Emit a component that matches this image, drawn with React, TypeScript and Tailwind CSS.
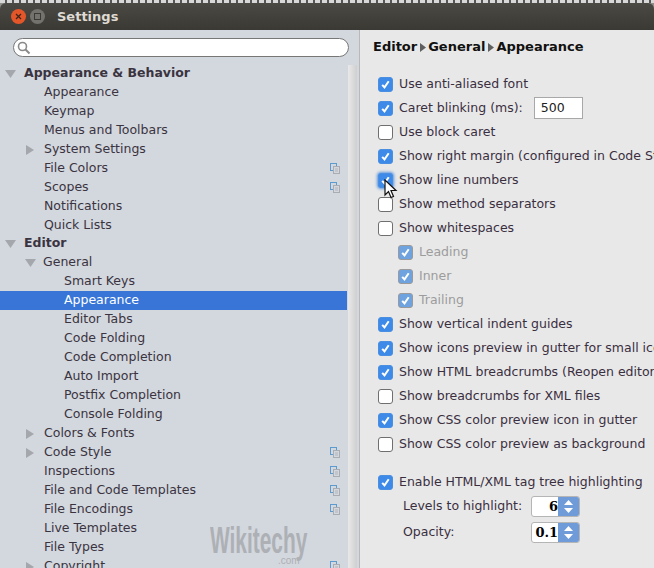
import React from 'react';

type TreeRow = {
  label: string;
  level: 0 | 1 | 2;
  bold?: boolean;
  arrow?: 'open' | 'closed';
  project?: boolean;
  selected?: boolean;
};

const tree: TreeRow[] = [
  { label: 'Appearance & Behavior', level: 0, bold: true, arrow: 'open' },
  { label: 'Appearance', level: 1 },
  { label: 'Keymap', level: 1 },
  { label: 'Menus and Toolbars', level: 1 },
  { label: 'System Settings', level: 1, arrow: 'closed' },
  { label: 'File Colors', level: 1, project: true },
  { label: 'Scopes', level: 1, project: true },
  { label: 'Notifications', level: 1 },
  { label: 'Quick Lists', level: 1 },
  { label: 'Editor', level: 0, bold: true, arrow: 'open' },
  { label: 'General', level: 1, arrow: 'open' },
  { label: 'Smart Keys', level: 2 },
  { label: 'Appearance', level: 2, selected: true },
  { label: 'Editor Tabs', level: 2 },
  { label: 'Code Folding', level: 2 },
  { label: 'Code Completion', level: 2 },
  { label: 'Auto Import', level: 2 },
  { label: 'Postfix Completion', level: 2 },
  { label: 'Console Folding', level: 2 },
  { label: 'Colors & Fonts', level: 1, arrow: 'closed' },
  { label: 'Code Style', level: 1, arrow: 'closed', project: true },
  { label: 'Inspections', level: 1, project: true },
  { label: 'File and Code Templates', level: 1, project: true },
  { label: 'File Encodings', level: 1, project: true },
  { label: 'Live Templates', level: 1 },
  { label: 'File Types', level: 1 },
  { label: 'Copyright', level: 1, arrow: 'closed', project: true },
];

const ProjectIcon = () => (
  <svg width="10" height="11" viewBox="0 0 10 11" className="shrink-0">
    <rect x="0.5" y="0.5" width="6" height="7" fill="none" stroke="#5b9bd0" />
    <rect x="3.5" y="3.5" width="6" height="7" fill="#d3d7de" stroke="#a9adb3" />
    <path d="M5 6h3M5 8h3" stroke="#b0b4ba" />
  </svg>
);

const CheckBox = ({ checked, muted, focused }: { checked: boolean; muted?: boolean; focused?: boolean }) => (
  <span
    className={`flex h-[15px] w-[15px] shrink-0 items-center justify-center rounded-[3px] border ${
      checked
        ? muted
          ? 'border-[#9a9a9a] bg-[#6ea3e0]'
          : 'border-[#4a8fe0] bg-[#3d8ae8]'
        : 'border-[#6f6f6f] bg-white'
    } ${focused ? 'shadow-[0_0_3px_1px_#5b93dc]' : ''}`}
  >
    {checked && (
      <svg width="11" height="11" viewBox="0 0 11 11">
        <path d="M2.2 5.8l2.3 2.6 4.2-6.2" fill="none" stroke="#fff" strokeWidth="2" />
      </svg>
    )}
  </span>
);

const Check = ({
  label,
  checked,
  muted,
  focused,
}: {
  label: string;
  checked: boolean;
  muted?: boolean;
  focused?: boolean;
}) => (
  <div className={`flex h-6 items-center gap-[6px] whitespace-nowrap ${muted ? 'pl-[20px] text-[#9c9c9c]' : ''}`}>
    <CheckBox checked={checked} muted={muted} focused={focused} />
    <span>{label}</span>
  </div>
);

const Spinner = ({ value }: { value: string }) => (
  <div className="flex h-[21px] w-[49px] overflow-hidden rounded-[3px] border border-[#b5b5b5] bg-white">
    <span className="flex-1 text-right font-['DejaVu_Serif',serif] text-[13px] leading-[19px] font-bold text-black">
      {value}
    </span>
    <span className="flex w-[21px] shrink-0 flex-col items-center justify-center gap-[3px] bg-[#6f9bd8]">
      <svg width="9" height="5" viewBox="0 0 9 5">
        <path d="M4.5 0L9 5H0z" fill="#fff" />
      </svg>
      <svg width="9" height="5" viewBox="0 0 9 5">
        <path d="M4.5 5L9 0H0z" fill="#fff" />
      </svg>
    </span>
  </div>
);

const Crumb = () => (
  <svg width="6" height="9" viewBox="0 0 6 9" className="mx-[2.5px] shrink-0">
    <path d="M0 0l6 4.5L0 9z" fill="#5f5f5f" />
  </svg>
);

export default function App() {
  return (
    <div className="relative h-[568px] w-[654px] overflow-hidden bg-[#8d8d8a] font-['DejaVu_Sans',sans-serif] text-[12.5px] text-[#3a3440]">
      {/* sliver of the window behind */}
      <div className="h-[3px] bg-[repeating-linear-gradient(90deg,#d8d8d8_0,#d8d8d8_5px,#555_5px,#555_7px)]" />

      <header className="flex h-[27px] items-center rounded-t-[6px] bg-gradient-to-b from-[#4a4943] to-[#3a3934] pl-[11px]">
        <span className="flex h-[15px] w-[15px] items-center justify-center rounded-full bg-[#e2562a]">
          <svg width="7" height="7" viewBox="0 0 7 7">
            <path d="M1 1l5 5M6 1L1 6" stroke="#41241a" strokeWidth="1.3" />
          </svg>
        </span>
        <span className="ml-[4px] flex h-[15px] w-[15px] items-center justify-center rounded-full bg-[#73726c]">
          <span className="h-[7px] w-[7px] border border-[#3a3935]" />
        </span>
        <span className="ml-[12px] text-[13px] font-bold text-[#dfdbd2]">Settings</span>
      </header>

      <div className="flex h-[538px]">
        <aside className="flex w-[360px] shrink-0 border-r border-[#b8b8b8] bg-[#d3d7de]">
          <div className="min-w-0 flex-1">
            <div className="px-[13px] pt-[8px] pb-[7px]">
              <div className="flex h-[19px] w-[336px] items-center rounded-full border border-[#777] bg-white pl-[3px]">
                <svg width="14" height="14" viewBox="0 0 14 14">
                  <circle cx="5.5" cy="5.5" r="4" fill="none" stroke="#8a8a8a" strokeWidth="1.6" />
                  <path d="M8.5 8.5l4 4" stroke="#8a8a8a" strokeWidth="2" />
                </svg>
              </div>
            </div>
            <ul>
              {tree.map((row, i) => (
                <li
                  key={i}
                  className={`flex h-[19px] w-[347px] items-center pr-[7px] ${
                    row.selected ? 'bg-[#3875d7] text-white' : ''
                  } ${row.label === 'Editor' ? '-mt-px' : ''} ${
                    row.level === 0 ? 'pl-[5px]' : row.level === 1 ? 'pl-[26px]' : 'pl-[64px]'
                  }`}
                >
                  {row.arrow === 'open' && (
                    <svg width="11" height="8" viewBox="0 0 11 8" className={row.level === 0 ? 'mr-[8px]' : 'mr-[7px] -ml-[1px]'}>
                      <path d="M0 0h11L5.5 8z" fill="#a4a7ac" />
                    </svg>
                  )}
                  {row.arrow === 'closed' && (
                    <svg width="8" height="10" viewBox="0 0 8 10" className="mr-[10px]">
                      <path d="M0 0l8 5-8 5z" fill="#a4a7ac" />
                    </svg>
                  )}
                  {!row.arrow && row.level === 1 && <span className="w-[18px] shrink-0" />}
                  <span className={`flex-1 whitespace-nowrap ${row.bold ? 'font-bold' : ''}`}>{row.label}</span>
                  {row.project && <ProjectIcon />}
                </li>
              ))}
            </ul>
          </div>
          <div className="mt-[35px] mr-[2px] w-[9px] shrink-0 bg-gradient-to-r from-[#e9e9e9] to-[#cfcfcf]" />
        </aside>

        <main className="min-w-0 flex-1 bg-[#e8e8e8] pl-[13px] text-[#3a2f3f]">
          <div className="flex h-[34px] items-center text-[13px] font-bold text-[#111]">
            Editor
            <Crumb />
            General
            <Crumb />
            Appearance
          </div>
          <div className="pt-[8px] pl-[5px]">
            <Check label="Use anti-aliased font" checked />
            <div className="flex h-6 items-center gap-[6px]">
              <CheckBox checked />
              <span>Caret blinking (ms):</span>
              <span className="ml-[5px] h-[22px] w-[49px] border border-[#a8a8a8] bg-white pl-[6px] leading-[19px] text-[#222]">500</span>
            </div>
            <Check label="Use block caret" checked={false} />
            <Check label="Show right margin (configured in Code Style options)" checked />
            <Check label="Show line numbers" checked focused />
            <Check label="Show method separators" checked={false} />
            <Check label="Show whitespaces" checked={false} />
            <Check label="Leading" checked muted />
            <Check label="Inner" checked muted />
            <Check label="Trailing" checked muted />
            <Check label="Show vertical indent guides" checked />
            <Check label="Show icons preview in gutter for small icons" checked />
            <Check label="Show HTML breadcrumbs (Reopen editor to apply)" checked />
            <Check label="Show breadcrumbs for XML files" checked={false} />
            <Check label="Show CSS color preview icon in gutter" checked />
            <Check label="Show CSS color preview as background" checked={false} />
            <div className="h-[14px]" />
            <Check label="Enable HTML/XML tag tree highlighting" checked />
            <div className="-mt-px flex h-[26px] items-center pl-[25px]">
              <span className="w-[128px]">Levels to highlight:</span>
              <Spinner value="6" />
            </div>
            <div className="flex h-[26px] items-center pl-[25px]">
              <span className="w-[128px]">Opacity:</span>
              <Spinner value="0.1" />
            </div>
          </div>
        </main>
      </div>

      {/* watermark */}
      <div className="pointer-events-none absolute top-[526px] left-[210px] origin-left scale-x-[0.58] font-['Liberation_Sans',sans-serif] text-[36px] leading-[29px] font-bold whitespace-nowrap text-[#adb0b4]">
        Wikitechy
      </div>
      <div className="pointer-events-none absolute top-[556px] left-[278px] font-['Liberation_Sans',sans-serif] text-[10px] leading-[10px] text-[#adb0b4]">
        .com
      </div>

      {/* mouse pointer */}
      <svg width="15" height="21" viewBox="0 0 15 21" className="absolute top-[179px] left-[384px]">
        <path d="M1 1v15l3.5-3.5 2.5 6 2.5-1-2.5-6H12z" fill="#fff" stroke="#111" strokeWidth="1.2" />
      </svg>
    </div>
  );
}
